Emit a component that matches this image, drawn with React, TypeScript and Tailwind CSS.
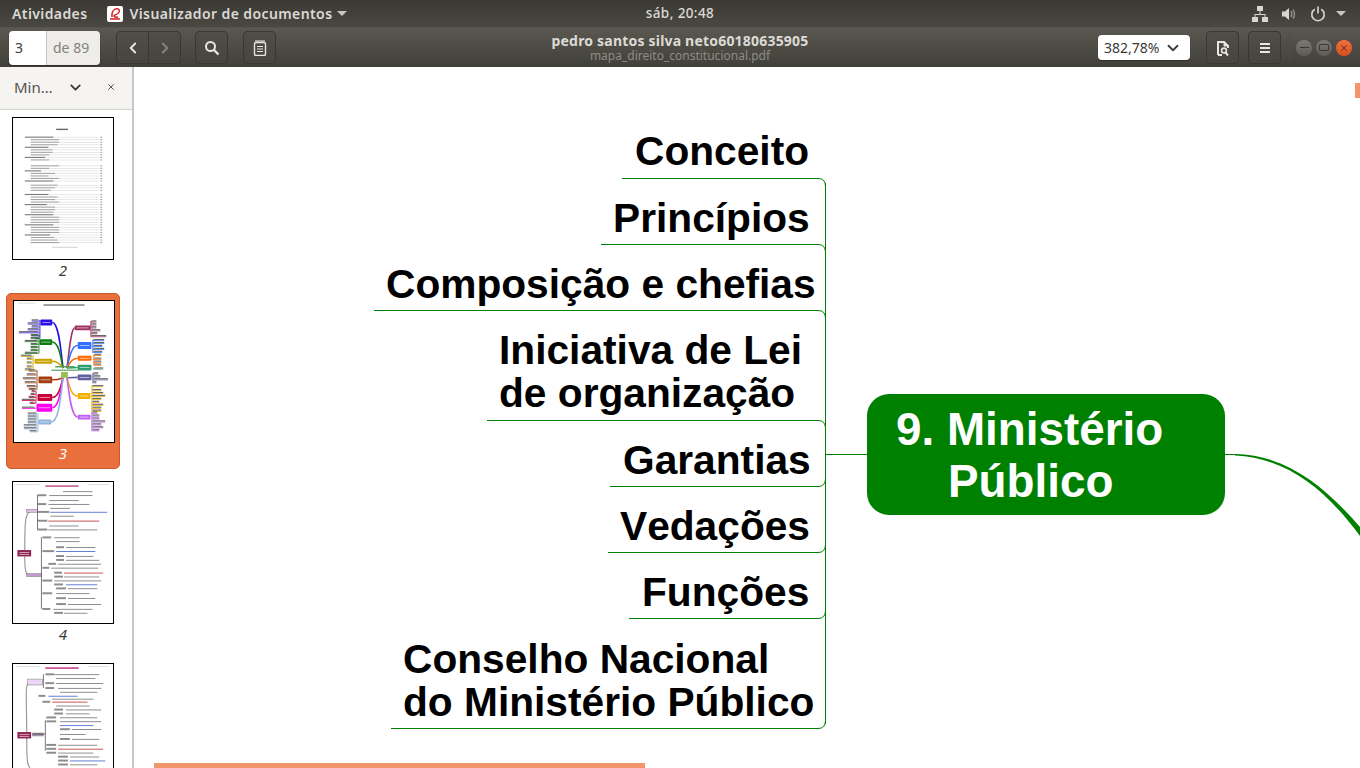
import React from "react";
import { ChevronDown, ChevronLeft, ChevronRight, X } from "lucide-react";

const chromeFont = "font-['Noto_Sans',sans-serif]";

// Branch labels of the mind map, in page coordinates minus the canvas origin (134, 67)
const labels = [
  { lines: ["Conceito"], className: "left-[501px] top-[63px]" },
  { lines: ["Princípios"], className: "left-[479px] top-[130px]" },
  { lines: ["Composição e chefias"], className: "left-[252px] top-[196px]" },
  { lines: ["Iniciativa de Lei", "de organização"], className: "left-[365px] top-[262px]" },
  { lines: ["Garantias"], className: "left-[489px] top-[372px]" },
  { lines: ["Vedações"], className: "left-[486px] top-[438px]" },
  { lines: ["Funções"], className: "left-[508px] top-[504px]" },
  { lines: ["Conselho Nacional", "do Ministério Público"], className: "left-[269px] top-[571px]" },
];

const connectors = [
  { x: 622, y: 178.5, up: false },
  { x: 601, y: 244.5, up: false },
  { x: 374, y: 310.5, up: false },
  { x: 487, y: 420.5, up: false },
  { x: 610, y: 486.5, up: true },
  { x: 608, y: 552.5, up: true },
  { x: 629, y: 618.5, up: true },
  { x: 391, y: 728.5, up: true },
];

const ToolButton = ({ children }: { children: React.ReactNode }) => (
  <div className="flex h-[33px] w-[33px] items-center justify-center rounded-[4px] border border-[#383732] bg-gradient-to-b from-[#504e47] to-[#46443e] text-[#e8e6e1]">
    {children}
  </div>
);

// ---- Thumbnails ----

const tocRows = [
  [3, 70], [6, 70], [9, 70], [12, 66], [15, 58], [18, 54], [21, 54], [24, 46], [27, 50], [30, 46],
  [37, 70], [40, 46], [43, 40], [46, 60], [49, 44], [52, 70], [55, 70], [60, 66], [63, 60], [66, 50],
  [71, 58], [74, 66], [77, 60], [80, 70], [83, 54], [86, 60], [89, 60], [92, 56], [95, 70], [98, 70],
  [101, 70], [104, 70], [107, 70], [110, 70], [113, 70], [116, 70], [119, 62], [122, 58], [125, 66], [128, 70],
];

const TocThumb = () => (
  <svg viewBox="0 0 102 143" className="block h-full w-full blur-[0.4px]">
    <rect x="44" y="10.5" width="12" height="1.4" fill="#666" />
    {tocRows.map(([y, w], i) => {
      const rowY = y * 0.86 + 16;
      const indent = i % 4 === 0 ? 12 : 18;
      return (
        <g key={i}>
          <rect x={indent} y={rowY} width={w / 2.4} height="1.1" fill={i % 4 === 0 ? "#777" : "#a4a4a4"} />
          <rect x={indent + w / 2.4} y={rowY + 0.3} width={88 - indent - w / 2.4} height="0.6" fill="#d8d8d8" />
          <rect x="89" y={rowY} width="2" height="1.1" fill="#a4a4a4" />
        </g>
      );
    })}
    <rect x="40" y="131" width="26" height="0.8" fill="#c4c4c4" />
  </svg>
);

const mapBranches = [
  { c: "#2a10e8", x: 27, y: 19, w: 12, h: 5, side: -1, stem: 26, rows: [[19, 8], [22, 12], [25, 8], [28, 12], [31, 21], [34, 8], [37, 5]] },
  { c: "#0b7d12", x: 26, y: 39, w: 13, h: 5, side: -1, stem: 25, rows: [[34, 8], [37, 8], [40, 14], [43, 8], [46, 8], [49, 8], [52, 14]] },
  { c: "#c9a400", x: 21, y: 59, w: 18, h: 4, side: -1, stem: 19, rows: [[55, 12], [58, 6], [62, 6], [66, 6], [69, 8]] },
  { c: "#a33d0e", x: 25, y: 77, w: 14, h: 6, side: -1, stem: 23, rows: [[70, 8], [74, 10], [78, 14], [82, 12], [86, 10], [89, 8]] },
  { c: "#c8003a", x: 24, y: 95, w: 15, h: 6, side: -1, stem: 22, rows: [[91, 4], [94, 5], [97, 7], [100, 14], [103, 6]] },
  { c: "#ff00f0", x: 23, y: 105, w: 16, h: 7, side: -1, stem: 22, rows: [[108, 14]] },
  { c: "#8fb2de", x: 25, y: 121, w: 13, h: 4, side: -1, stem: 24, rows: [[114, 10], [117, 10], [120, 10], [123, 10], [126, 14], [129, 14], [132, 8]] },
  { c: "#a03262", x: 62, y: 25, w: 16, h: 4, side: 1, stem: 78, rows: [[20, 6], [23, 6], [26, 6], [29, 10], [32, 7], [35, 16]] },
  { c: "#3072ff", x: 65, y: 42, w: 14, h: 6, side: 1, stem: 80, rows: [[39, 12], [42, 12], [45, 10], [48, 12], [51, 10]] },
  { c: "#ff6a00", x: 65, y: 56, w: 14, h: 4, side: 1, stem: 81, rows: [[54, 8], [58, 8], [61, 8], [64, 8]] },
  { c: "#2e9f70", x: 65, y: 65, w: 14, h: 5, side: 1, stem: 81, rows: [[68, 10]] },
  { c: "#60609e", x: 65, y: 75, w: 14, h: 5, side: 1, stem: 80, rows: [[73, 6], [76, 8], [79, 16], [82, 4]] },
  { c: "#f0b000", x: 65, y: 94, w: 13, h: 5, side: 1, stem: 79, rows: [[86, 12], [90, 10], [93, 12], [96, 14], [99, 10], [102, 8], [105, 12], [108, 10], [111, 10]] },
  { c: "#c25ff2", x: 65, y: 116, w: 13, h: 4, side: 1, stem: 79, rows: [[113, 6], [116, 8], [119, 8], [122, 14], [125, 10], [128, 12], [131, 8]] },
];

const MapThumb = () => (
  <svg viewBox="0 0 102 143" className="block h-full w-full blur-[0.3px]">
    <rect x="30" y="3" width="42" height="1.4" fill="#777" />
    <rect x="4" y="1.5" width="18" height="0.6" fill="#ccc" />
    {mapBranches.map((b, i) => {
      const left = b.side < 0;
      const startX = left ? b.x + b.w : b.x;
      const midY = b.y + b.h / 2;
      const endY = midY < 72 ? 68 : 78;
      const stemTop = Math.min(...b.rows.map((r) => r[0]));
      const stemBottom = Math.max(...b.rows.map((r) => r[0]));
      return (
        <g key={i}>
          <path
            d={`M${startX} ${midY} C${left ? 46 : 58} ${midY} ${left ? 48 : 56} ${(midY + endY * 2) / 3} ${left ? 50 : 54} ${endY}`}
            fill="none"
            stroke={b.c}
            strokeWidth="1.6"
          />
          <rect x={b.x} y={b.y - 0.5} width={b.w} height={b.h + 1} rx="1" fill={b.c} />
          <rect x={b.x + 2} y={midY - 0.4} width={b.w - 4} height="0.8" fill="#ffffff" opacity="0.7" />
          <rect x={b.stem} y={stemTop} width="0.9" height={stemBottom - stemTop + 1} fill={b.c} />
          {b.rows.map(([y, w], j) => (
            <g key={j}>
              <rect x={left ? b.stem - w : b.stem} y={y + 0.7} width={w} height="0.8" fill={b.c} />
              <rect x={left ? b.stem - w : b.stem + 1} y={y - 0.7} width={w - 1} height="1.2" fill="#666" />
            </g>
          ))}
        </g>
      );
    })}
    <rect x="42" y="66" width="20" height="1.4" fill="#4a9a55" />
    <rect x="38" y="69.5" width="28" height="1.4" fill="#6fb070" />
    <rect x="48" y="72" width="7" height="6" fill="#9abf55" />
  </svg>
);

type TreeRow = [number, number, number, number, number];

// y, box x, box width, leaf x, leaf width
const page4Rows: TreeRow[] = [
  [13, 25, 9, 37, 44], [9, 37, 0, 51, 30], [18, 37, 0, 37, 30], [22, 25, 9, 36, 42], [26, 37, 0, 38, 20],
  [30, 25, 12, 38, 58], [34, 38, 0, 38, 24], [39, 25, 10, 36, 52], [44, 37, 0, 37, 30], [48, 25, 10, 36, 50],
  [56, 30, 9, 42, 26], [60, 42, 0, 44, 24], [66, 44, 8, 54, 30], [70, 30, 12, 44, 40], [75, 44, 8, 54, 28],
  [79, 44, 8, 54, 34], [83, 36, 8, 46, 44], [87, 30, 7, 39, 48], [92, 42, 8, 52, 40], [96, 42, 9, 52, 36],
  [100, 30, 10, 42, 48], [104, 42, 9, 54, 32], [108, 44, 10, 56, 30], [113, 30, 10, 44, 34], [118, 44, 10, 56, 28],
  [124, 44, 10, 56, 34], [129, 30, 8, 41, 40], [133, 42, 9, 52, 24],
];

const page5Rows: TreeRow[] = [
  [10, 33, 9, 42, 46], [14, 42, 0, 44, 40], [19, 33, 9, 44, 48], [24, 33, 9, 46, 44], [28, 46, 0, 48, 38],
  [32, 26, 7, 36, 30], [35, 36, 0, 40, 42], [38, 30, 8, 40, 36], [42, 42, 0, 44, 34], [46, 42, 9, 54, 36],
  [50, 42, 9, 54, 24], [54, 34, 10, 48, 38], [58, 34, 10, 48, 42], [62, 48, 0, 48, 34], [66, 48, 10, 60, 30],
  [71, 20, 11, 48, 26], [76, 48, 10, 60, 28], [82, 34, 10, 46, 40], [86, 34, 10, 46, 46], [90, 34, 10, 46, 36],
  [94, 46, 10, 58, 30], [98, 46, 10, 58, 36], [102, 46, 10, 58, 28],
];

const TreeThumb = ({ rows, title, page }: { rows: TreeRow[]; title: string; page: 4 | 5 }) => (
  <svg viewBox="0 0 102 143" className="block h-full w-full blur-[0.4px]">
    <rect x="33" y="3" width="34" height="1.5" fill={title} />
    <rect x="3" y="2" width="24" height="0.6" fill="#ccc" />
    <rect x="76" y="2" width="22" height="0.6" fill="#ccc" />
    {page === 4 ? (
      <>
        <path d="M12 69 C12 40 12 29 20 29 M12 75 C12 90 12 95 20 95" fill="none" stroke="#999" strokeWidth="1.2" />
        <rect x="14" y="27.5" width="11" height="3" fill="#dcc0e6" stroke="#777" strokeWidth="0.5" />
        <rect x="14" y="93" width="15" height="3" fill="#c49ad2" stroke="#777" strokeWidth="0.5" />
        <path d="M25 13 V48 M25 29 H25 M29 56 V129" fill="none" stroke="#666" strokeWidth="0.9" />
      </>
    ) : (
      <>
        <path d="M14 69 C14 40 12 19 16 19 M14 75 C14 100 14 105 22 112" fill="none" stroke="#999" strokeWidth="1.2" />
        <rect x="15" y="15" width="15" height="6" fill="#ecd8f4" stroke="#777" strokeWidth="0.5" />
        <rect x="20" y="70" width="11" height="3" fill="#c49ad2" stroke="#777" strokeWidth="0.5" />
        <path d="M31 10 V24 M31 71 H33 M33 57 V88" fill="none" stroke="#666" strokeWidth="0.9" />
      </>
    )}
    <rect x="4.5" y="69" width="14" height="6.5" fill="#8f2452" />
    <rect x="6.5" y="71" width="10" height="0.8" fill="#ffffff" opacity="0.7" />
    <rect x="6.5" y="73" width="10" height="0.8" fill="#ffffff" opacity="0.7" />
    {rows.map(([y, bx, bw, lx, lw], i) => (
      <g key={i}>
        {bw > 0 && <rect x={bx} y={y - 0.9} width={bw} height="2" fill="#666" opacity="0.75" />}
        <rect x={lx} y={y} width={Math.min(lw, 98 - lx)} height="0.9" fill={i % 8 === 5 ? "#5070d0" : i % 11 === 7 ? "#c04040" : "#808080"} />
      </g>
    ))}
  </svg>
);

const thumbs = [
  { id: "2", label: "2", page: <TocThumb /> },
  { id: "3", label: "3", page: <MapThumb />, active: true },
  { id: "4", label: "4", page: <TreeThumb rows={page4Rows} title="#c0508a" page={4} /> },
  { id: "5", label: "", page: <TreeThumb rows={page5Rows} title="#c0308a" page={5} /> },
];

export default function App() {
  return (
    <div className={`flex h-[768px] w-[1360px] flex-col overflow-hidden bg-white ${chromeFont}`}>
      {/* Shell top bar */}
      <div className="grid h-[27px] shrink-0 grid-cols-[1fr_auto_1fr] items-center bg-gradient-to-b from-[#3a3935] to-[#4a4841] text-[14px] font-medium tracking-[0.4px] text-[#dcdad5]">
        <div className="flex items-center">
          <span className="ml-3 font-semibold">Atividades</span>
          <div className="ml-[20px] flex h-4 w-4 items-center justify-center rounded-[2px] bg-white">
            <svg viewBox="0 0 16 16" className="h-4 w-4" fill="none" stroke="#d42020" strokeWidth="1.4">
              <path d="M3 13 H13 M5 11 C4 5 8 2 11 3 C14 4 12 8 8 9 C6 9.5 7 12 11 11" />
            </svg>
          </div>
          <span className="ml-[6px] font-semibold">Visualizador de documentos</span>
          <div className="ml-[5px] h-0 w-0 border-x-[5px] border-t-[5px] border-x-transparent border-t-[#c8c6c1]" />
        </div>
        <div className="text-[13.5px] font-medium">sáb, 20:48</div>
        <div className="flex items-center justify-end">
          <svg viewBox="0 0 16 16" className="mr-[13px] h-4 w-4" fill="#d8d6d1">
            <rect x="5" y="0" width="6" height="5" />
            <rect x="0" y="11" width="6" height="5" />
            <rect x="10" y="11" width="6" height="5" />
            <path d="M7.5 5 h1 v3 h5 v3 h-1 v-2 h-9 v2 h-1 v-3 h5 z" />
          </svg>
          <svg viewBox="0 0 16 16" className="mr-[13px] h-4 w-4">
            <path d="M1 5.5 H4 L8 2 V14 L4 10.5 H1 Z" fill="#d8d6d1" />
            <path d="M10 5 C11.2 7 11.2 9 10 11 M12 3.5 C14 6 14 10 12 12.5" fill="none" stroke="#8e8c86" strokeWidth="1.5" />
          </svg>
          <svg viewBox="0 0 16 16" className="mr-[10px] h-4 w-4" fill="none" stroke="#d8d6d1" strokeWidth="1.6">
            <path d="M4.8 3.2 A6.2 6.2 0 1 0 11.2 3.2 M8 0.5 V7.5" />
          </svg>
          <div className="mr-[14px] h-0 w-0 border-x-[5px] border-t-[5px] border-x-transparent border-t-[#c8c6c1]" />
        </div>
      </div>

      {/* Document viewer toolbar */}
      <div className="grid h-[40px] shrink-0 grid-cols-[1fr_auto_1fr] items-center border-t border-[#55534c] bg-gradient-to-b from-[#5a5850] to-[#403f39]">
        <div className="flex items-center">
          <div className="ml-[9px] flex h-[34px] w-[91px] overflow-hidden rounded-[4px] text-[14px] shadow-[0_1px_1px_#2f2e2a]">
            <div className="flex w-[37px] items-center bg-white pl-[6px] text-[#3c3b37]">3</div>
            <div className="flex flex-1 items-center border-l border-[#c8c6c1] bg-[#eeedea] pl-[6px] text-[#85837d]">de 89</div>
          </div>
          <div className="ml-[16px] flex h-[33px] w-[65px] overflow-hidden rounded-[4px] border border-[#383732] bg-gradient-to-b from-[#504e47] to-[#46443e]">
            <div className="flex w-[32px] items-center justify-center border-r border-[#383732] text-[#e8e6e1]">
              <ChevronLeft size={18} strokeWidth={2.5} />
            </div>
            <div className="flex flex-1 items-center justify-center text-[#85837c]">
              <ChevronRight size={18} strokeWidth={2.5} />
            </div>
          </div>
          <div className="ml-[14px]">
            <ToolButton>
              <svg viewBox="0 0 16 16" className="h-4 w-4" fill="none" stroke="#e8e6e1">
                <circle cx="6.5" cy="6.5" r="4.5" strokeWidth="2" />
                <path d="M10 10 L14.5 14.5" strokeWidth="2.4" />
              </svg>
            </ToolButton>
          </div>
          <div className="ml-[15px]">
            <ToolButton>
              <svg viewBox="0 0 16 16" className="h-4 w-4" fill="none" stroke="#e8e6e1">
                <rect x="2.5" y="2.5" width="11" height="13" rx="1.5" strokeWidth="1.4" />
                <path d="M4 0 V3 M6 0 V3 M8 0 V3 M10 0 V3 M12 0 V3 M5 6.5 H11 M5 9 H11 M5 11.5 H11" strokeWidth="1.1" />
              </svg>
            </ToolButton>
          </div>
        </div>
        <div className="flex flex-col items-center">
          <span className="text-[14px] font-bold leading-[16px] tracking-[0.2px] text-[#dcdad5]">pedro santos silva neto60180635905</span>
          <span className="text-[12px] leading-[14px] text-[#8e8c85]">mapa_direito_constitucional.pdf</span>
        </div>
        <div className="flex items-center justify-end">
          <div className="flex h-[25px] w-[92px] items-center justify-between rounded-[4px] bg-white pl-[6px] pr-[8px] text-[14px] text-[#3c3b37] shadow-[0_1px_1px_#2f2e2a]">
            <span>382,78%</span>
            <ChevronDown size={18} strokeWidth={2.4} />
          </div>
          <div className="ml-[16px]">
            <ToolButton>
              <svg viewBox="0 0 16 16" className="h-4 w-4" fill="none" stroke="#e8e6e1">
                <path d="M3 15 V2 H9 L13 6 V8 M3 15 H7" strokeWidth="2" />
                <path d="M9 2 V6 H13 Z" fill="#e8e6e1" strokeWidth="1" />
                <circle cx="9" cy="10.5" r="2.4" strokeWidth="1.6" />
                <path d="M10.5 12.5 L13 15.5" strokeWidth="2" />
              </svg>
            </ToolButton>
          </div>
          <div className="ml-[9px]">
            <ToolButton>
              <svg viewBox="0 0 16 16" className="h-4 w-4" fill="#e8e6e1">
                <rect x="3" y="3" width="10" height="2" />
                <rect x="3" y="7" width="10" height="2" />
                <rect x="3" y="11" width="10" height="2" />
              </svg>
            </ToolButton>
          </div>
          <div className="ml-[8px] h-[28px] w-px bg-[#4f4d46]" />
          <div className="ml-[6px] mr-[8px] flex items-center gap-[4px]">
            <div className="flex h-4 w-4 items-center justify-center rounded-full bg-gradient-to-b from-[#7c7a74] to-[#5d5b55] text-[#3a3935]">
              <div className="h-px w-[9px] bg-[#3a3935]" />
            </div>
            <div className="flex h-4 w-4 items-center justify-center rounded-full bg-gradient-to-b from-[#7c7a74] to-[#5d5b55]">
              <div className="h-[7px] w-[10px] rounded-[1px] border border-[#3a3935]" />
            </div>
            <div className="flex h-4 w-4 items-center justify-center rounded-full bg-gradient-to-b from-[#f0703c] to-[#d9501f] text-[#4a2a18]">
              <X size={10} strokeWidth={2} />
            </div>
          </div>
        </div>
      </div>

      <div className="flex min-h-0 flex-1">
        {/* Thumbnail sidebar */}
        <div className="flex w-[134px] shrink-0 flex-col overflow-hidden border-r-2 border-[#c9c8c6] bg-white">
          <div className="flex h-[43px] shrink-0 items-center border-b border-[#d3d2cf] bg-[#f5f4f2] pb-[2px] pl-[14px] text-[15px] text-[#55534e]">
            <span className="w-[50px]">Min…</span>
            <ChevronDown size={17} strokeWidth={2.6} className="ml-[3px] text-[#3c3b37]" />
            <X size={10} strokeWidth={2} className="ml-[22px] text-[#3c3b37]" />
          </div>
          <div className="flex flex-col items-start gap-[6px] pl-[6px] pt-[1px]">
            {thumbs.map((t) => (
              <div
                key={t.id}
                className={`h-[176px] w-[114px] shrink-0 rounded-[5px] px-[6px] pt-[6px] ${t.active ? "border border-[#c95c2c] bg-[#e96f3c] text-white" : "text-[#3c3b37]"}`}
              >
                <div className="h-[143px] w-[102px] border border-black bg-white">{t.page}</div>
                {t.label && <div className="text-center text-[15px] italic leading-[20px]">{t.label}</div>}
              </div>
            ))}
          </div>
        </div>

        {/* PDF canvas with the mind map */}
        <div className="relative min-w-0 flex-1 overflow-hidden bg-white font-['Liberation_Sans',sans-serif] text-black [font-kerning:none]">
          <svg viewBox="134 67 1226 701" className="absolute inset-0 h-[701px] w-[1226px]" fill="none" stroke="#008000">
            <path d="M825.5 183 V724 M825 454.5 H868" />
            {connectors.map((c) => (
              <path
                key={c.y}
                d={`M${c.x} ${c.y} H818 Q825.5 ${c.y} 825.5 ${c.up ? c.y - 8 : c.y + 8}`}
              />
            ))}
            <path d="M1225 454.5 H1236" />
            <path d="M1235 454 C1288 455 1326 488 1360 527 V536 C1326 490 1288 458 1235 455.5 Z" fill="#008000" stroke="none" />
          </svg>

          {labels.map((l) => (
            <div key={l.lines[0]} className={`absolute whitespace-pre text-[40.7px] font-bold leading-[43px] ${l.className}`}>
              {l.lines.map((line) => (
                <div key={line}>{line}</div>
              ))}
            </div>
          ))}

          <div className="absolute left-[733px] top-[327px] h-[121px] w-[358px] rounded-[22px] bg-[#008000] pl-[29px] pt-[10px] text-[45.8px] font-bold leading-[52px] text-white">
            <div>9. Ministério</div>
            <div className="pl-[52px]">Público</div>
          </div>

          <div className="absolute right-0 top-[16px] h-[15px] w-[5px] bg-[#f4966c]" />
          <div className="absolute bottom-0 left-[20px] h-[5px] w-[491px] bg-[#f4966c]" />
        </div>
      </div>
    </div>
  );
}
